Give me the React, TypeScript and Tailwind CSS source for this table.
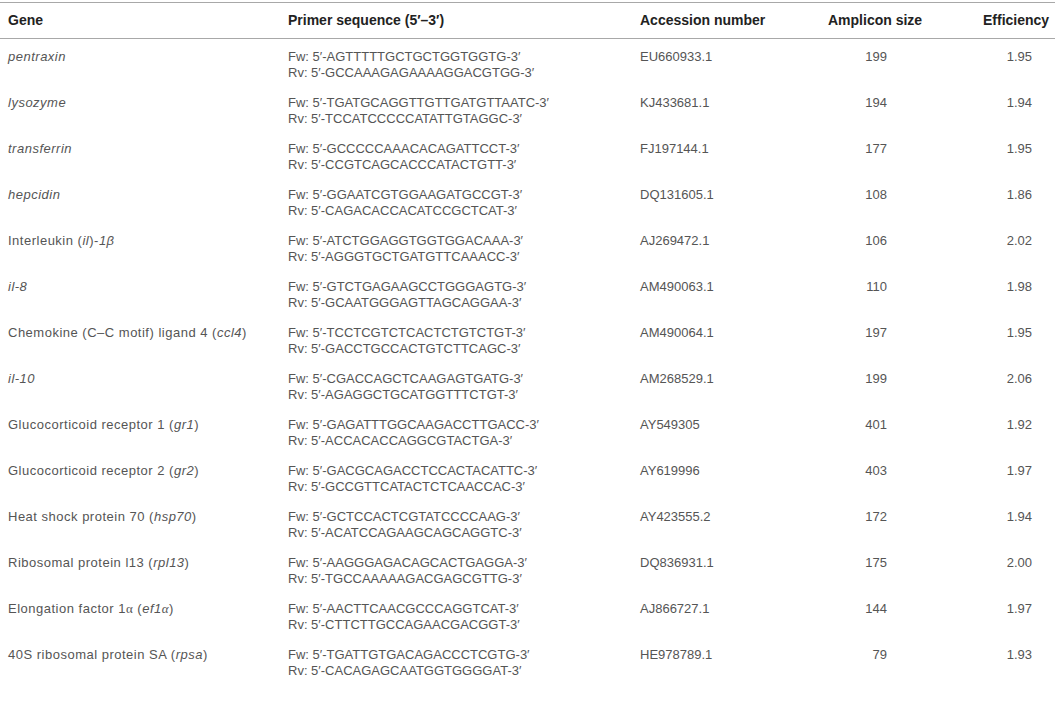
import React from "react";

type Row = {
  gene: React.ReactNode;
  fw: string;
  rv: string;
  acc: string;
  size: string;
  eff: string;
};

const A = () => <span style={{ fontFamily: '"Liberation Serif", serif' }}>α</span>;

const rows: Row[] = [
  { gene: <i>pentraxin</i>, fw: "AGTTTTTGCTGCTGGTGGTG", rv: "GCCAAAGAGAAAAGGACGTGG", acc: "EU660933.1", size: "199", eff: "1.95" },
  { gene: <i>lysozyme</i>, fw: "TGATGCAGGTTGTTGATGTTAATC", rv: "TCCATCCCCCATATTGTAGGC", acc: "KJ433681.1", size: "194", eff: "1.94" },
  { gene: <i>transferrin</i>, fw: "GCCCCCAAACACAGATTCCT", rv: "CCGTCAGCACCCATACTGTT", acc: "FJ197144.1", size: "177", eff: "1.95" },
  { gene: <i>hepcidin</i>, fw: "GGAATCGTGGAAGATGCCGT", rv: "CAGACACCACATCCGCTCAT", acc: "DQ131605.1", size: "108", eff: "1.86" },
  { gene: <>Interleukin (<i>il</i>)-<i>1β</i></>, fw: "ATCTGGAGGTGGTGGACAAA", rv: "AGGGTGCTGATGTTCAAACC", acc: "AJ269472.1", size: "106", eff: "2.02" },
  { gene: <i>il-8</i>, fw: "GTCTGAGAAGCCTGGGAGTG", rv: "GCAATGGGAGTTAGCAGGAA", acc: "AM490063.1", size: "110", eff: "1.98" },
  { gene: <>Chemokine (C–C motif) ligand 4 (<i>ccl4</i>)</>, fw: "TCCTCGTCTCACTCTGTCTGT", rv: "GACCTGCCACTGTCTTCAGC", acc: "AM490064.1", size: "197", eff: "1.95" },
  { gene: <i>il-10</i>, fw: "CGACCAGCTCAAGAGTGATG", rv: "AGAGGCTGCATGGTTTCTGT", acc: "AM268529.1", size: "199", eff: "2.06" },
  { gene: <>Glucocorticoid receptor 1 (<i>gr1</i>)</>, fw: "GAGATTTGGCAAGACCTTGACC", rv: "ACCACACCAGGCGTACTGA", acc: "AY549305", size: "401", eff: "1.92" },
  { gene: <>Glucocorticoid receptor 2 (<i>gr2</i>)</>, fw: "GACGCAGACCTCCACTACATTC", rv: "GCCGTTCATACTCTCAACCAC", acc: "AY619996", size: "403", eff: "1.97" },
  { gene: <>Heat shock protein 70 (<i>hsp70</i>)</>, fw: "GCTCCACTCGTATCCCCAAG", rv: "ACATCCAGAAGCAGCAGGTC", acc: "AY423555.2", size: "172", eff: "1.94" },
  { gene: <>Ribosomal protein l13 (<i>rpl13</i>)</>, fw: "AAGGGAGACAGCACTGAGGA", rv: "TGCCAAAAAGACGAGCGTTG", acc: "DQ836931.1", size: "175", eff: "2.00" },
  { gene: <>Elongation factor 1<A /> (<i>ef1<A /></i>)</>, fw: "AACTTCAACGCCCAGGTCAT", rv: "CTTCTTGCCAGAACGACGGT", acc: "AJ866727.1", size: "144", eff: "1.97" },
  { gene: <>40S ribosomal protein SA (<i>rpsa</i>)</>, fw: "TGATTGTGACAGACCCTCGTG", rv: "CACAGAGCAATGGTGGGGAT", acc: "HE978789.1", size: "79", eff: "1.93" },
];

export default function App() {
  return (
    <div
      className="w-[1055px] h-[706px] bg-white overflow-hidden"
      style={{ fontFamily: '"Liberation Sans", Arial, sans-serif' }}
    >
      <div className="mt-[2px] border-t border-b border-[#a8a8a8] h-[37px] flex items-center pl-[8px] text-[14px] font-bold text-[#222]">
        <div className="w-[280px]">Gene</div>
        <div className="w-[352px]">Primer sequence (5′–3′)</div>
        <div className="w-[188px]">Accession number</div>
        <div className="w-[97px]">Amplicon size</div>
        <div className="flex-1 pl-[58px]">Efficiency</div>
      </div>
      <div className="text-[13px] leading-[16px] text-[#555]">
        {rows.map((r, i) => (
          <div key={i} className="flex pl-[8px] h-[46px] pt-[10px]">
            <div className="w-[280px] tracking-[0.5px]">{r.gene}</div>
            <div className="w-[352px]">
              <div>Fw: 5′-{r.fw}-3′</div>
              <div>Rv: 5′-{r.rv}-3′</div>
            </div>
            <div className="w-[188px]">{r.acc}</div>
            <div className="w-[97px] text-right pr-[38px]">{r.size}</div>
            <div className="flex-1 text-right pr-[23px]">{r.eff}</div>
          </div>
        ))}
      </div>
    </div>
  );
}
